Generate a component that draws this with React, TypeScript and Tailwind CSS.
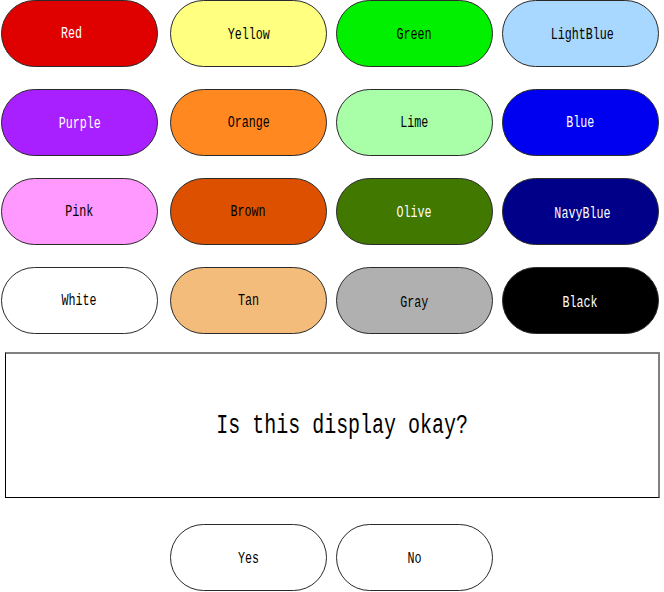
import React from "react";

type Item = { label: string; bg: string; fg: string; off?: string };

const items: Item[] = [
  { label: "Red", bg: "bg-[#df0000]", fg: "text-white", off: "-translate-x-2" },
  { label: "Yellow", bg: "bg-[#ffff80]", fg: "text-black", off: "translate-y-px" },
  { label: "Green", bg: "bg-[#00f000]", fg: "text-black", off: "translate-y-px" },
  { label: "LightBlue", bg: "bg-[#a8d8ff]", fg: "text-black", off: "translate-x-0.5 translate-y-px" },
  { label: "Purple", bg: "bg-[#a820ff]", fg: "text-white", off: "translate-y-px" },
  { label: "Orange", bg: "bg-[#ff8820]", fg: "text-black" },
  { label: "Lime", bg: "bg-[#a8ffa8]", fg: "text-black" },
  { label: "Blue", bg: "bg-[#0000f0]", fg: "text-white" },
  { label: "Pink", bg: "bg-[#ff98ff]", fg: "text-black" },
  { label: "Brown", bg: "bg-[#dd5000]", fg: "text-black" },
  { label: "Olive", bg: "bg-[#407800]", fg: "text-white", off: "translate-y-px" },
  { label: "NavyBlue", bg: "bg-[#000088]", fg: "text-white", off: "translate-x-0.5 translate-y-0.5" },
  { label: "White", bg: "bg-white", fg: "text-black" },
  { label: "Tan", bg: "bg-[#f4bc7a]", fg: "text-black" },
  { label: "Gray", bg: "bg-[#b0b0b0]", fg: "text-black", off: "translate-y-0.5" },
  { label: "Black", bg: "bg-black", fg: "text-white", off: "translate-y-0.5" },
];

const font = { fontFamily: '"Liberation Mono", "DejaVu Sans Mono", monospace' };

function Pill({ item }: { item: Item }) {
  return (
    <div
      className={`w-[157px] h-[67px] rounded-full border border-[#2a2a2a] ${item.bg} flex items-center justify-center`}
    >
      <span
        className={`inline-block text-[16px] leading-none scale-x-[0.73] ${item.fg} ${item.off ?? ""}`}
        style={font}
      >
        {item.label}
      </span>
    </div>
  );
}

export default function App() {
  return (
    <div className="w-[664px] h-[592px] bg-white overflow-hidden relative">
      <div className="grid grid-cols-[169px_166px_166px_157px] gap-y-[22px] pl-px">
        {items.map((it) => (
          <Pill key={it.label} item={it} />
        ))}
      </div>
      <div className="mt-[18px] ml-[5px] w-[655px] h-[146px] border-t-2 border-r-2 border-t-[#808080] border-r-[#808080] border-l border-b border-l-black border-b-black flex items-center justify-center">
        <span
          className="inline-block text-[27px] leading-none scale-x-[0.74] translate-x-[10px] translate-y-px text-black whitespace-pre"
          style={font}
        >
          Is this display okay?
        </span>
      </div>
      <div className="mt-[26px] flex gap-[9px] pl-[170px]">
        <Pill item={{ label: "Yes", bg: "bg-white", fg: "text-black", off: "translate-y-px" }} />
        <Pill item={{ label: "No", bg: "bg-white", fg: "text-black", off: "translate-y-px" }} />
      </div>
    </div>
  );
}
